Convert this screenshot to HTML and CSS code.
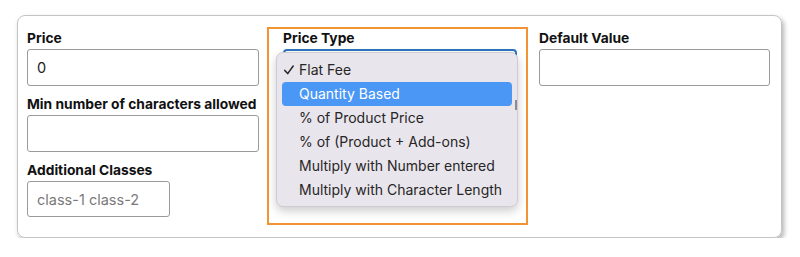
FILE: index.html
```html
<!DOCTYPE html>
<html lang="en">
<head>
    <meta charset="UTF-8">
    <meta name="viewport" content="width=device-width, initial-scale=1.0">
    <title>Addon Field Settings</title>
    <link rel="stylesheet" href="styles.css">
</head>
<body>
    <div class="card">
        <div class="col">
            <div class="field">
                <label for="price">Price</label>
                <input type="text" id="price" value="0">
            </div>
            <div class="field">
                <label for="minchars">Min number of characters allowed</label>
                <input type="text" id="minchars">
            </div>
            <div class="field">
                <label for="classes">Additional Classes</label>
                <input type="text" id="classes" class="short" placeholder="class-1 class-2">
            </div>
        </div>

        <div class="col highlight">
            <div class="field">
                <label>Price Type</label>
                <div class="select"></div>
            </div>
            <ul class="dropdown">
                <li>
                    <svg class="check" width="10" height="10" viewBox="0 0 10 10"><path d="M0.8 5.4 L3.7 8.6 L9.2 1" fill="none" stroke="#262626" stroke-width="1.5" stroke-linecap="round" stroke-linejoin="round"/></svg>
                    Flat Fee
                </li>
                <li class="active">Quantity Based</li>
                <li>% of Product Price</li>
                <li>% of (Product + Add-ons)</li>
                <li>Multiply with Number entered</li>
                <li>Multiply with Character Length</li>
                <span class="thumb"></span>
            </ul>
        </div>

        <div class="col">
            <div class="field">
                <label for="default">Default Value</label>
                <input type="text" id="default">
            </div>
        </div>
    </div>
</body>
</html>
```

FILE: styles.css
```css
body {
    margin: 0;
    padding: 15px 18px 0 17px;
    background: #fff;
    font-family: Inter, "Liberation Sans", Arial, sans-serif;
}

.card {
    display: grid;
    grid-template-columns: 231px 261px 231px;
    column-gap: 10px;
    width: 765px;
    height: 223px;
    box-sizing: border-box;
    padding: 11px 10px 0 9px;
    border: 1px solid #c4c4c4;
    border-radius: 8px;
    box-shadow: 2px 3px 5px rgba(0, 0, 0, 0.3);
}

.card .col:first-child {
    margin-right: -1px;
}

.col {
    padding-top: 3px;
}

.highlight {
    position: relative;
    height: 198px;
    box-sizing: border-box;
    padding: 1px 9px 0 14px;
    border: 2px solid #f29433;
    margin-left: -1px;
    margin-right: 1px;
}

.field {
    margin-bottom: 10px;
}

.field label {
    display: block;
    font-size: 13.8px;
    font-weight: bold;
    line-height: 16px;
    margin-bottom: 3px;
    color: #111;
    white-space: nowrap;
}

.field input {
    display: block;
    width: 100%;
    height: 37px;
    box-sizing: border-box;
    padding: 0 9px;
    border: 1px solid #9a9a9a;
    border-radius: 3px;
    font-family: inherit;
    font-size: 14.5px;
    color: #222;
}

.field input.short {
    width: 143px;
    height: 36px;
}

.field input::placeholder {
    color: #7a7a7a;
}

.select {
    height: 37px;
    box-sizing: border-box;
    border: 2px solid #2f73c0;
    border-radius: 4px;
}

.dropdown {
    position: absolute;
    top: 23px;
    left: 7px;
    width: 242px;
    height: 155px;
    box-sizing: border-box;
    margin: 0;
    padding: 5px 5px 0 5px;
    list-style: none;
    background: #e9e5ec;
    border: 1px solid #cfcbd2;
    border-radius: 7px;
    box-shadow: 0 4px 10px rgba(0, 0, 0, 0.2);
}

.dropdown li {
    position: relative;
    height: 24px;
    line-height: 24px;
    padding-left: 17px;
    font-size: 14px;
    color: #262626;
    border-radius: 4px;
    white-space: nowrap;
}

.dropdown .check {
    position: absolute;
    left: 2px;
    top: 7px;
}

.dropdown li.active {
    background: #4a97f5;
    color: #fff;
}

.thumb {
    position: absolute;
    right: 0;
    top: 47px;
    width: 2px;
    height: 10px;
    background: #8c8c8c;
}
```
